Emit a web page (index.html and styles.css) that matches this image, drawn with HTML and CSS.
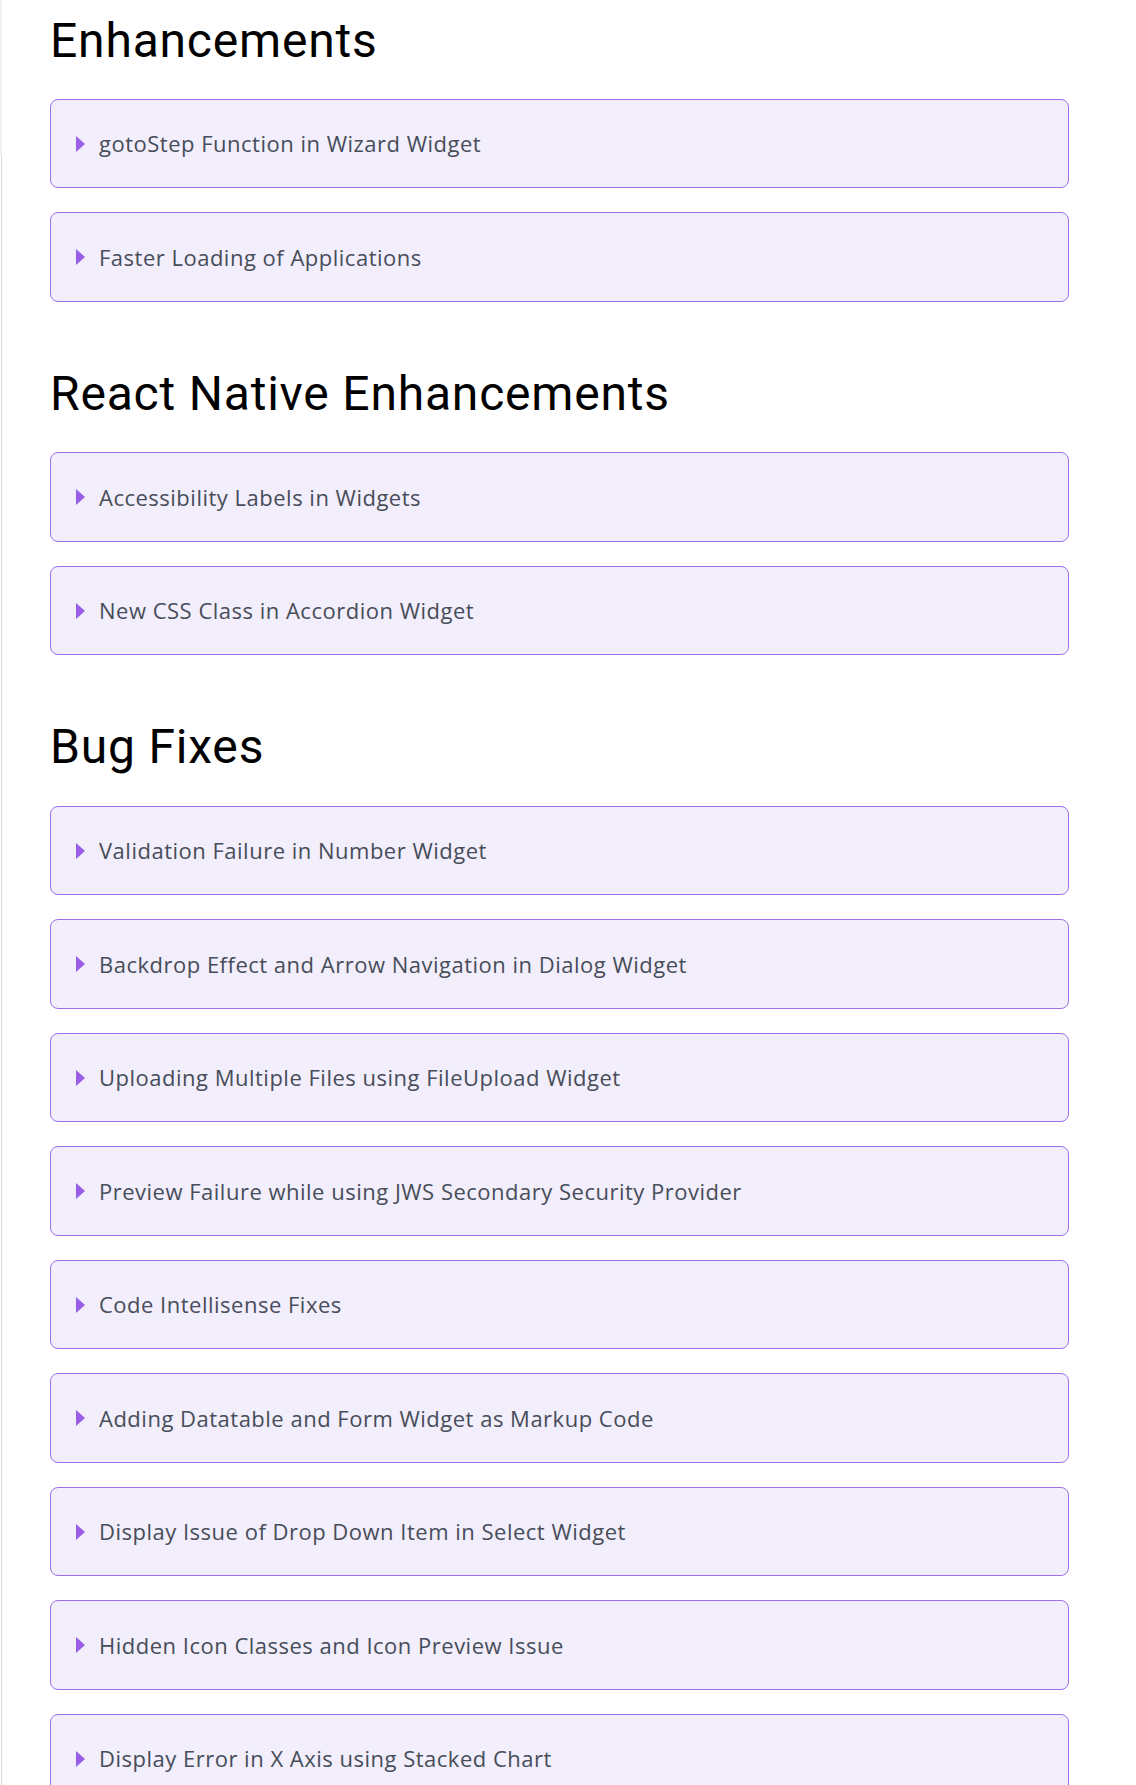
FILE: index.html
```html
<!DOCTYPE html>
<html lang="en">
<head>
<meta charset="utf-8">
<title>Release Notes</title>
<link rel="stylesheet" href="styles.css">
</head>
<body>
<div class="shell">
  <div class="rail"><div class="rail-top"></div><div class="rail-rest"></div></div>
  <main class="page">
    <section class="section">
      <h2 class="title">Enhancements</h2>
      <div class="list">
        <div class="item"><svg class="caret" width="9" height="16" viewBox="0 0 9 16"><polygon points="0,0 9,8 0,16"/></svg><span class="label">gotoStep Function in Wizard Widget</span></div>
        <div class="item"><svg class="caret" width="9" height="16" viewBox="0 0 9 16"><polygon points="0,0 9,8 0,16"/></svg><span class="label">Faster Loading of Applications</span></div>
      </div>
    </section>
    <section class="section">
      <h2 class="title">React Native Enhancements</h2>
      <div class="list">
        <div class="item"><svg class="caret" width="9" height="16" viewBox="0 0 9 16"><polygon points="0,0 9,8 0,16"/></svg><span class="label">Accessibility Labels in Widgets</span></div>
        <div class="item"><svg class="caret" width="9" height="16" viewBox="0 0 9 16"><polygon points="0,0 9,8 0,16"/></svg><span class="label">New CSS Class in Accordion Widget</span></div>
      </div>
    </section>
    <section class="section">
      <h2 class="title">Bug Fixes</h2>
      <div class="list">
        <div class="item"><svg class="caret" width="9" height="16" viewBox="0 0 9 16"><polygon points="0,0 9,8 0,16"/></svg><span class="label">Validation Failure in Number Widget</span></div>
        <div class="item"><svg class="caret" width="9" height="16" viewBox="0 0 9 16"><polygon points="0,0 9,8 0,16"/></svg><span class="label">Backdrop Effect and Arrow Navigation in Dialog Widget</span></div>
        <div class="item"><svg class="caret" width="9" height="16" viewBox="0 0 9 16"><polygon points="0,0 9,8 0,16"/></svg><span class="label">Uploading Multiple Files using FileUpload Widget</span></div>
        <div class="item"><svg class="caret" width="9" height="16" viewBox="0 0 9 16"><polygon points="0,0 9,8 0,16"/></svg><span class="label">Preview Failure while using JWS Secondary Security Provider</span></div>
        <div class="item"><svg class="caret" width="9" height="16" viewBox="0 0 9 16"><polygon points="0,0 9,8 0,16"/></svg><span class="label">Code Intellisense Fixes</span></div>
        <div class="item"><svg class="caret" width="9" height="16" viewBox="0 0 9 16"><polygon points="0,0 9,8 0,16"/></svg><span class="label">Adding Datatable and Form Widget as Markup Code</span></div>
        <div class="item"><svg class="caret" width="9" height="16" viewBox="0 0 9 16"><polygon points="0,0 9,8 0,16"/></svg><span class="label">Display Issue of Drop Down Item in Select Widget</span></div>
        <div class="item"><svg class="caret" width="9" height="16" viewBox="0 0 9 16"><polygon points="0,0 9,8 0,16"/></svg><span class="label">Hidden Icon Classes and Icon Preview Issue</span></div>
        <div class="item"><svg class="caret" width="9" height="16" viewBox="0 0 9 16"><polygon points="0,0 9,8 0,16"/></svg><span class="label">Display Error in X Axis using Stacked Chart</span></div>
      </div>
    </section>
  </main>
</div>
</body>
</html>
```

FILE: styles.css
```css
html, body {
  margin: 0;
  padding: 0;
  background: #ffffff;
}

body {
  font-family: Roboto, "Noto Sans", "Liberation Sans", sans-serif;
  color: #000;
}

.shell {
  display: flex;
  min-height: 1785px;
  align-items: stretch;
}

.rail {
  width: 2px;
  display: flex;
  flex-direction: column;
  flex-shrink: 0;
}

.rail-top {
  height: 155px;
  background: #f1f1f3;
}

.rail-rest {
  flex: 1;
  border-left: 1px solid #ffffff;
  background: #dcd9e6;
}

.page {
  margin-left: 48px;
  width: 1019px;
  padding-top: 11.6px;
}

.section + .section {
  margin-top: 63px;
}

.title {
  margin: 0 0 29.4px 0;
  font-size: 48px;
  line-height: 58px;
  font-weight: 400;
  color: #000;
  letter-spacing: 0.8px;
}

.list {
  display: flex;
  flex-direction: column;
  gap: 24px;
}

.item {
  box-sizing: border-box;
  height: 89.5px;
  display: flex;
  align-items: center;
  padding: 0 0 1px 25px;
  background: #f2eefc;
  border: 1px solid #9f6fe6;
  border-radius: 8px;
}

.caret {
  fill: #9a5ee6;
  flex-shrink: 0;
  margin-top: 1px;
}

.label {
  margin-left: 14px;
  font-family: "Open Sans", "Noto Sans", Roboto, sans-serif;
  font-size: 22px;
  color: #474d59;
  letter-spacing: 0.5px;
}
```
